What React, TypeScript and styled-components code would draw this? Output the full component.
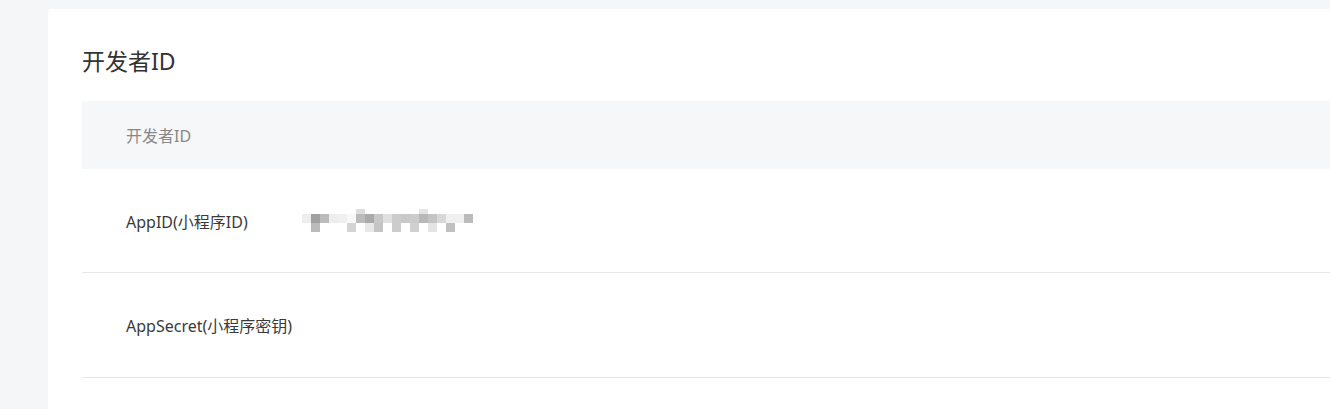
import React from "react";
import styled, { createGlobalStyle } from "styled-components";

const Global = createGlobalStyle`
  html, body {
    margin: 0;
    padding: 0;
    background: #f5f6f8;
    overflow: hidden;
  }
  body {
    font-family: "Noto Sans", "Noto Sans CJK SC", sans-serif;
    color: #333;
  }
`;

const Page = styled.div`
  padding: 9px 0 0 48px;
  min-height: 400px;
`;

const Card = styled.section`
  width: 1320px;
  min-height: 420px;
  background: #fff;
  border-radius: 4px 0 0 0;
  padding: 0 34px;
  box-sizing: border-box;
`;

const Title = styled.h2`
  margin: 0;
  padding: 36px 0 24px;
  font-size: 23px;
  line-height: 32px;
  font-weight: 400;
  color: #333;
`;

const Table = styled.div`
  display: flex;
  flex-direction: column;
`;

const HeaderRow = styled.div`
  height: 68px;
  display: flex;
  align-items: center;
  padding-left: 44px;
  background: #f6f7f9;
  font-size: 16px;
  color: #888;
`;

const Row = styled.div<{ $tall?: boolean }>`
  height: ${(p) => (p.$tall ? 104 : 103)}px;
  display: flex;
  align-items: center;
  padding-left: 44px;
  border-bottom: 1px solid #e7e7e7;
  font-size: 16px;
  color: #3a3a3a;
`;

const Label = styled.div`
  width: 176px;
  flex-shrink: 0;
`;

const Value = styled.div`
  display: flex;
  align-items: center;
  height: 24px;
`;

const main = [
  "#eee", "#a0a0a0", "#bbb", "#eee", "#f0f0f0", "#f8f8f8", "#bbb", "#aaa", "#c8c8c8",
  "#e0e0e0", "#ccc", "#c8c8c8", "#ccc", "#b8b8b8", "#c4c4c4", "#d8d8d8", "#f0f0f0",
  "#f0f0f0", "#bbb",
];
const top: Record<number, string> = { 6: "#ddd", 13: "#e4e4e4" };
const bottom: Record<number, string> = {
  1: "#bbb", 5: "#d4d4d4", 7: "#e8e8e8", 8: "#c4c4c4", 10: "#ccc", 12: "#d0d0d0",
  14: "#e4e4e4", 16: "#c0c0c0",
};

const Mosaic = () => (
  <svg width={171} height={24} viewBox="0 0 171 24" aria-hidden="true">
    {Object.entries(top).map(([i, c]) => (
      <rect key={"t" + i} x={Number(i) * 9} y={0} width={9} height={5} fill={c} />
    ))}
    {main.map((c, i) => (
      <rect key={"m" + i} x={i * 9} y={5} width={9} height={9} fill={c} />
    ))}
    {Object.entries(bottom).map(([i, c]) => (
      <rect key={"b" + i} x={Number(i) * 9} y={14} width={9} height={9} fill={c} />
    ))}
  </svg>
);

export default function App() {
  return (
    <>
      <Global />
      <Page>
        <Card>
          <Title>开发者ID</Title>
          <Table>
            <HeaderRow>开发者ID</HeaderRow>
            <Row>
              <Label>AppID(小程序ID)</Label>
              <Value>
                <Mosaic />
              </Value>
            </Row>
            <Row $tall>
              <Label>AppSecret(小程序密钥)</Label>
            </Row>
          </Table>
        </Card>
      </Page>
    </>
  );
}
